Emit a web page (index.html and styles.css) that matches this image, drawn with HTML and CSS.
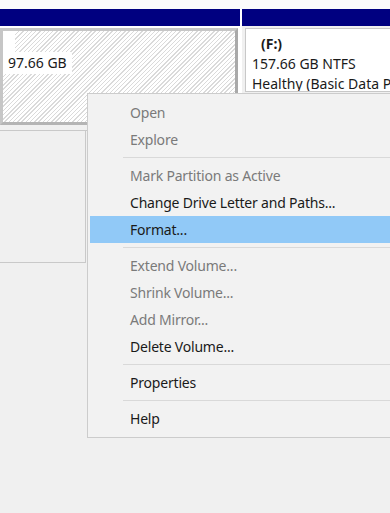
FILE: index.html
```html
<!DOCTYPE html>
<html lang="en">
<head>
  <meta charset="UTF-8">
  <title>Disk Management</title>
  <link rel="stylesheet" href="styles.css">
</head>
<body>
  <div class="volumes">
    <div class="volumes__strip"></div>

    <div class="disk">
      <div class="partition partition--unallocated">
        <div class="partition__bar"></div>
        <div class="partition__box">
          <div class="partition__blank"></div>
          <span class="partition__size">97.66 GB</span>
        </div>
      </div>
      <div class="partition partition--primary">
        <div class="partition__bar"></div>
        <div class="partition__box">
          <div class="partition__name">(F:)</div>
          <div class="partition__line">157.66 GB NTFS</div>
          <div class="partition__line">Healthy (Basic Data Partition)</div>
        </div>
      </div>
    </div>

    <div class="disk disk--next">
      <div class="disk__label"></div>
      <div class="disk__rest"></div>
    </div>
  </div>

  <ul class="menu">
    <li class="menu__item menu__item--disabled">Open</li>
    <li class="menu__item menu__item--disabled">Explore</li>
    <li class="menu__sep"></li>
    <li class="menu__item menu__item--disabled">Mark Partition as Active</li>
    <li class="menu__item">Change Drive Letter and Paths...</li>
    <li class="menu__item menu__item--active">Format...</li>
    <li class="menu__sep"></li>
    <li class="menu__item menu__item--disabled">Extend Volume...</li>
    <li class="menu__item menu__item--disabled">Shrink Volume...</li>
    <li class="menu__item menu__item--disabled">Add Mirror...</li>
    <li class="menu__item">Delete Volume...</li>
    <li class="menu__sep"></li>
    <li class="menu__item">Properties</li>
    <li class="menu__sep"></li>
    <li class="menu__item">Help</li>
  </ul>
</body>
</html>
```

FILE: styles.css
```css
html {
  box-sizing: border-box;
  background: #f0f0f0;
}

*, *:before, *:after {
  box-sizing: inherit;
}

body {
  margin: 0;
  width: 390px;
  height: 513px;
  overflow: hidden;
  position: relative;
  font-family: 'Noto Sans', 'Open Sans', sans-serif;
  font-size: 14px;
  color: #1a1a1a;
}

.volumes__strip {
  height: 9px;
  background: #fbfbfb;
}

/* Disk row */
.disk {
  display: grid;
  grid-template-columns: 240px 1fr;
  column-gap: 2px;
  background: #ffffff;
}

.partition__bar {
  height: 17px;
  background: #000080;
}

.partition--unallocated .partition__box {
  height: 97px;
  margin: 2px 2px 0 0;
  border: 3px solid #c6c6c6;
  border-right-color: #a9a9a9;
  border-bottom-color: #b4b4b4;
  background: repeating-linear-gradient(135deg, #ffffff 0, #ffffff 2px, #dadada 2px, #dadada 3px);
}

.partition__blank {
  width: 12px;
  height: 21px;
  background: #ffffff;
}

.partition__size {
  display: inline-block;
  padding: 0 5px;
  line-height: 22px;
  background: #ffffff;
}

.partition--primary {
  background: #f0f0f0;
}

.partition--primary .partition__bar {
  margin-bottom: 2px;
}

.partition__box {
  overflow: hidden;
  white-space: nowrap;
}

.partition--primary .partition__box {
  height: 64px;
  margin-left: 3px;
  padding: 5px 0 0 6px;
  border: 1px solid #c8c8c8;
  border-right: 0;
  background: #ffffff;
  line-height: 20px;
}

.partition__name {
  font-weight: bold;
  padding-left: 9px;
}

/* Next disk, mostly hidden under the menu */
.disk--next {
  margin-top: 5px;
  height: 133px;
  background: #f0f0f0;
  border-top: 1px solid #c9c9c9;
  grid-template-columns: 86px 1fr;
  column-gap: 0;
}

.disk__label {
  border-right: 1px solid #c9c9c9;
  border-bottom: 1px solid #c9c9c9;
}

/* Context menu */
.menu {
  position: absolute;
  left: 87px;
  top: 93px;
  width: 330px;
  margin: 0;
  padding: 5px 0;
  list-style: none;
  background: #f2f2f2;
  border: 1px solid #cccccc;
  font-size: 14px;
  letter-spacing: -0.2px;
}

.menu__item {
  height: 27px;
  line-height: 28px;
  margin-left: 2px;
  padding-left: 40px;
  color: #1a1a1a;
  white-space: nowrap;
}

.menu__item--disabled {
  color: #7a7a7a;
}

.menu__item--active {
  background: #91c9f7;
}

.menu__sep {
  height: 9px;
  margin-left: 35px;
  position: relative;
}

.menu__sep:after {
  content: '';
  display: block;
  position: absolute;
  left: 0;
  right: 0;
  top: 4px;
  border-top: 1px solid #d9d9d9;
}
```
